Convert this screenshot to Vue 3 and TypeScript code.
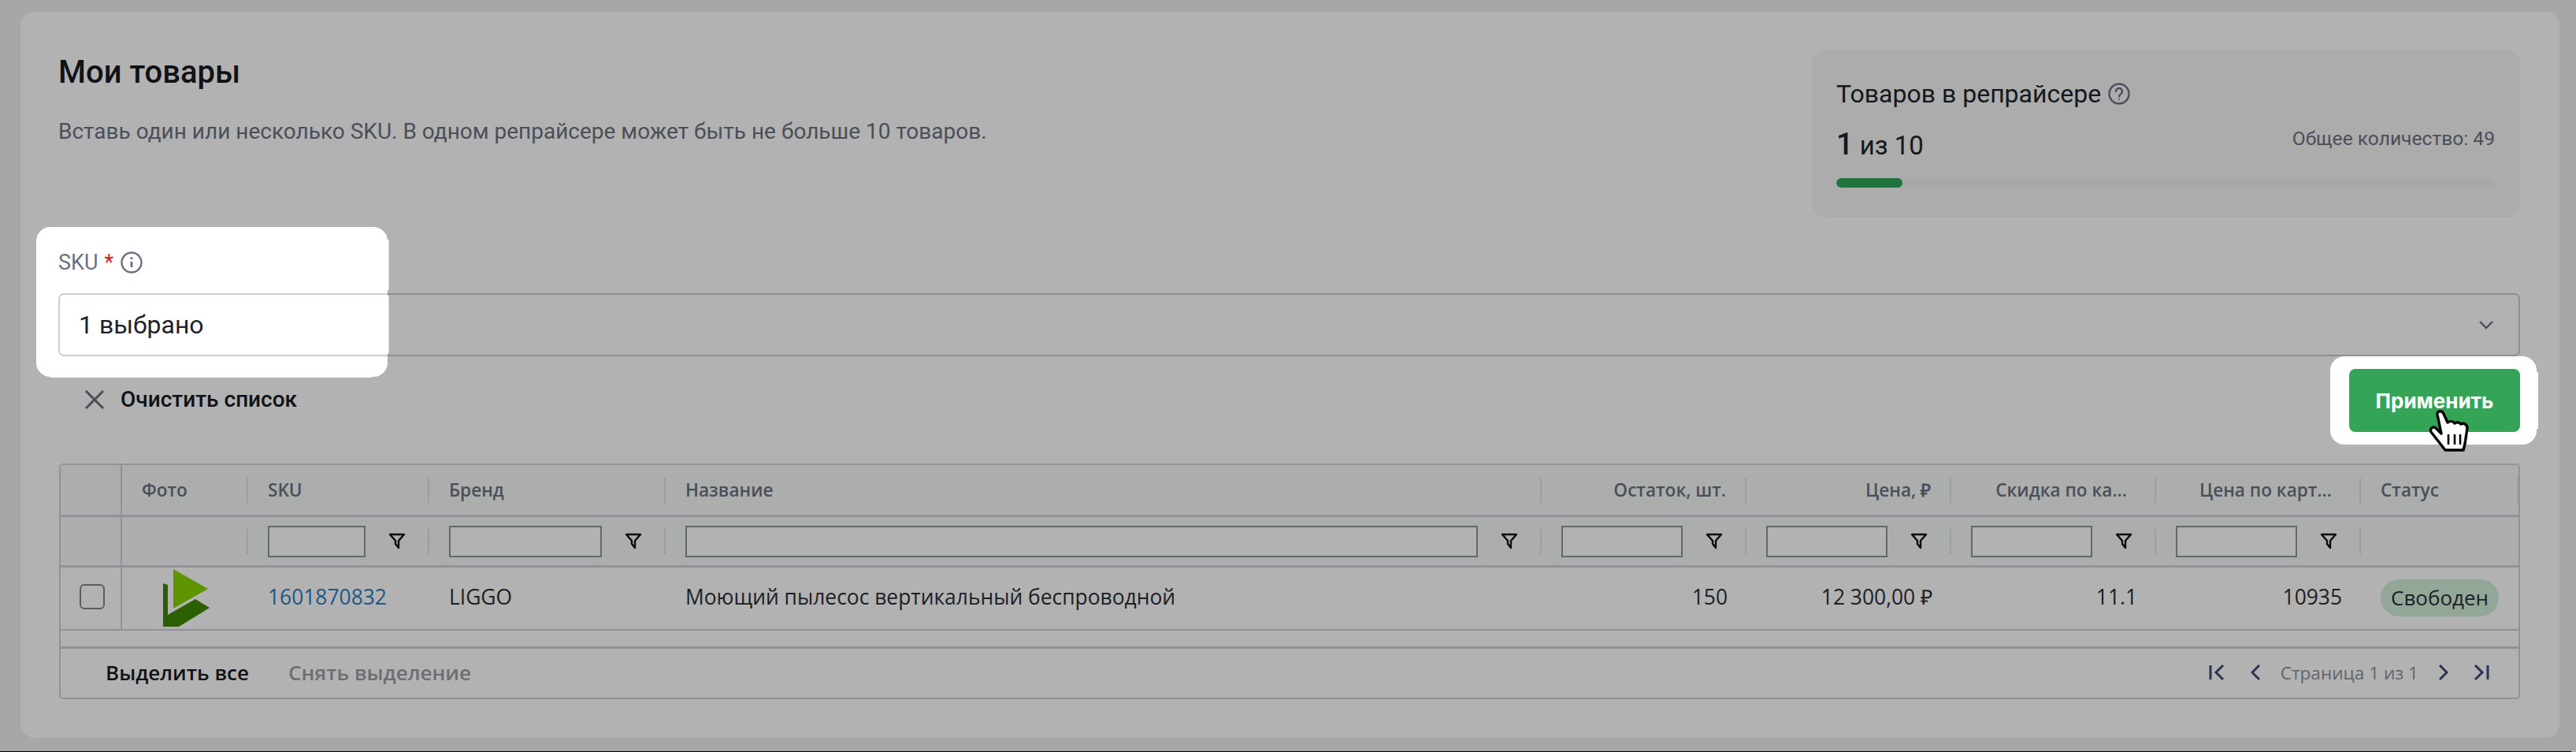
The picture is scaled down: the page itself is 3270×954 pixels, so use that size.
<script setup lang="ts">
interface Column {
  title: string
  align: 'left' | 'right'
  filter: boolean
  clip?: boolean
}

const columns: Column[] = [
  { title: 'SKU', align: 'left', filter: true },
  { title: 'Бренд', align: 'left', filter: true },
  { title: 'Название', align: 'left', filter: true },
  { title: 'Остаток, шт.', align: 'right', filter: true },
  { title: 'Цена, ₽', align: 'right', filter: true },
  { title: 'Скидка по ка...', align: 'right', filter: true, clip: true },
  { title: 'Цена по карт...', align: 'right', filter: true, clip: true },
  { title: 'Статус', align: 'left', filter: false },
]

const cells: { text: string; align: 'left' | 'right' }[] = [
  { text: 'LIGGO', align: 'left' },
  { text: 'Моющий пылесос вертикальный беспроводной', align: 'left' },
  { text: '150', align: 'right' },
  { text: '12 300,00 ₽', align: 'right' },
  { text: '11.1', align: 'right' },
  { text: '10935', align: 'right' },
]
</script>

<template>
  <div class="page">
    <section class="card">
      <header class="head">
        <div class="intro">
          <h1>Мои товары</h1>
          <p>Вставь один или несколько SKU. В одном репрайсере может быть не больше 10 товаров.</p>
        </div>
        <aside class="stats">
          <div class="stats-title">
            Товаров в репрайсере
            <svg width="30" height="30" viewBox="0 0 30 30" fill="none" stroke="#6b7280" stroke-width="2.4">
              <circle cx="15" cy="15" r="12.5" />
              <path d="M11 12a4 4 0 1 1 6.3 3.2c-1.5 1-2.3 1.7-2.3 3.3" stroke-linecap="round" />
              <circle cx="15" cy="22" r="1" fill="#6b7280" stroke="none" />
            </svg>
          </div>
          <div class="stats-row">
            <span class="count"><b>1</b> из 10</span>
            <span class="total">Общее количество: 49</span>
          </div>
          <div class="track"><div class="fill"></div></div>
        </aside>
      </header>

      <div class="field">
        <label class="label">
          SKU <em>*</em>
          <svg width="30" height="30" viewBox="0 0 30 30" fill="none" stroke="#6b7280" stroke-width="2.4">
            <circle cx="15" cy="15" r="12.5" />
            <path d="M15 14v7" stroke-width="3" />
            <circle cx="15" cy="9.5" r="1.6" fill="#6b7280" stroke="none" />
          </svg>
        </label>
        <div class="select">
          <span>1 выбрано</span>
          <svg width="24" height="24" viewBox="0 0 24 24" fill="none" stroke="#6b7280" stroke-width="2.4">
            <path d="M4 8l8 8 8-8" />
          </svg>
        </div>
      </div>

      <div class="actions">
        <button class="clear" type="button">
          <svg width="26" height="24" viewBox="0 0 26 24" fill="none" stroke="#6b7280" stroke-width="3">
            <path d="M2 1l22 22M24 1L2 23" />
          </svg>
          Очистить список
        </button>
        <button class="apply" type="button">Применить</button>
      </div>

      <div class="table">
        <div class="grid head-row">
          <div class="cell first"></div>
          <div class="cell"><span class="txt">Фото</span><i class="sep"></i></div>
          <div v-for="c in columns" :key="c.title" class="cell">
            <span class="txt" :class="[c.align, { clip: c.clip }]">{{ c.title }}</span>
            <i class="sep"></i>
          </div>
        </div>

        <div class="grid filter-row">
          <div class="cell first"></div>
          <div class="cell"><span class="txt"></span><i class="sep"></i></div>
          <div v-for="c in columns" :key="c.title" class="cell">
            <template v-if="c.filter">
              <input class="filter-input" type="text" />
              <svg class="funnel" width="22" height="21" viewBox="0 0 22 21" fill="none" stroke="#111" stroke-width="2.4">
                <path d="M2 2h18l-7 8v9l-4-5v-4z" stroke-linejoin="round" />
              </svg>
            </template>
            <span v-else class="txt"></span>
            <i class="sep" v-if="c.filter"></i>
          </div>
        </div>

        <div class="grid data-row">
          <div class="cell first check-cell"><span class="check"></span></div>
          <div class="cell photo">
            <svg width="60" height="75" viewBox="0 0 60 75">
              <path d="M13 0l44 25-44 25z" fill="#87d400" />
              <path d="M0 18l6 2v38l35-20 18 11-39 24H0z" fill="#408900" />
            </svg>
          </div>
          <div class="cell value"><a class="txt link">1601870832</a></div>
          <div v-for="c in cells" :key="c.text" class="cell value">
            <span class="txt" :class="c.align">{{ c.text }}</span>
          </div>
          <div class="cell"><span class="badge">Свободен</span></div>
        </div>

        <div class="strip"></div>

        <footer class="foot">
          <div class="select-links">
            <span class="strong">Выделить все</span>
            <span class="muted">Снять выделение</span>
          </div>
          <nav class="pager">
            <svg width="20" height="24" viewBox="0 0 20 24" fill="none" stroke="#3b4a78" stroke-width="3">
              <path d="M2 3v18M18 3l-9 9 9 9" />
            </svg>
            <svg class="gap-first" width="12" height="24" viewBox="0 0 12 24" fill="none" stroke="#3b4a78" stroke-width="3">
              <path d="M11 3l-9 9 9 9" />
            </svg>
            <span class="page-text">Страница 1 из 1</span>
            <svg width="12" height="24" viewBox="0 0 12 24" fill="none" stroke="#3b4a78" stroke-width="3">
              <path d="M1 3l9 9-9 9" />
            </svg>
            <svg class="gap-last" width="20" height="24" viewBox="0 0 20 24" fill="none" stroke="#3b4a78" stroke-width="3">
              <path d="M2 3l9 9-9 9M18 3v18" />
            </svg>
          </nav>
        </footer>
      </div>
    </section>
    <div class="edge"></div>

    <div class="dim"></div>
    <svg class="hand" width="52" height="56" viewBox="-2 -2 52 56">
      <path
        d="M9 5C8 0 15-1 17 4l5 11c3-2 7-2 9 1 3-2 6-1 8 1 4-2 8 1 8 5l-3 20-2 8H19L1 27c-2-5 3-8 7-4l6 6z"
        fill="#fff"
        stroke="#000"
        stroke-width="3.4"
        stroke-linejoin="round"
      />
      <path d="M23 30v13M31 30v13M38 30v13" stroke="#000" stroke-width="2.6" />
    </svg>
  </div>
</template>

<style scoped>
.page {
  position: relative;
  width: 3270px;
  height: 954px;
  overflow: hidden;
  box-sizing: border-box;
  padding: 15px 21px 0 26px;
  background: #f0f0f0;
  font-family: Roboto, "Noto Sans", sans-serif;
  color: #1f2329;
}
.card {
  height: 921px;
  box-sizing: border-box;
  padding: 48px 50px 0 48px;
  background: #fff;
  border-radius: 18px;
}
.head {
  display: flex;
  justify-content: space-between;
  align-items: flex-start;
  height: 213px;
}
h1 {
  margin: 6px 0 0;
  font-size: 40px;
  line-height: 46px;
  font-weight: 500;
  color: #161a20;
}
.intro p {
  margin: 34px 0 0;
  font-size: 28px;
  line-height: 36px;
  color: #6b7280;
}
.stats {
  width: 899px;
  height: 213px;
  box-sizing: border-box;
  padding: 38px 32px 0 31px;
  background: #f6f6f6;
  border-radius: 18px;
}
.stats-title {
  display: flex;
  align-items: center;
  gap: 8px;
  font-size: 32px;
  line-height: 36px;
}
.stats-row {
  display: flex;
  justify-content: space-between;
  align-items: flex-start;
  margin-top: 24px;
}
.count {
  font-size: 33px;
  line-height: 44px;
}
.count b {
  font-size: 38px;
  font-weight: 500;
}
.total {
  font-size: 24.6px;
  line-height: 30px;
  color: #6b7280;
}
.track {
  height: 12px;
  margin-top: 19px;
  border-radius: 6px;
  background: #f0f2f3;
  overflow: hidden;
}
.fill {
  width: 10%;
  height: 100%;
  border-radius: 6px;
  background: #2ca657;
}
.field {
  margin-top: 42px;
}
.label {
  display: flex;
  align-items: center;
  gap: 8px;
  height: 30px;
  font-size: 27px;
  color: #6b7280;
}
.label em {
  color: #d11a2a;
  font-style: normal;
}
.select {
  display: flex;
  align-items: center;
  justify-content: space-between;
  box-sizing: border-box;
  height: 80px;
  margin-top: 24px;
  padding: 0 29px 0 24px;
  border: 2px solid #cbced3;
  border-radius: 7px;
  background: #fff;
  font-size: 32px;
  color: #1f2329;
}
.actions {
  display: flex;
  justify-content: space-between;
  align-items: center;
  margin-top: 16px;
  height: 80px;
  padding-left: 33px;
}
.clear {
  display: flex;
  align-items: center;
  gap: 20px;
  padding: 0 0 3px;
  border: 0;
  background: none;
  font: 500 28px Roboto, sans-serif;
  color: #161a20;
}
.apply {
  width: 217px;
  height: 80px;
  border: 0;
  border-radius: 8px;
  background: #34a557;
  font: 700 26px Inter, "Noto Sans", sans-serif;
  color: #fff;
}
.table {
  margin-top: 40px;
  margin-left: 1px;
  border: 2px solid #ced1d8;
  border-radius: 5px;
  font-family: "Open Sans", sans-serif;
}
.grid {
  display: grid;
  grid-template-columns: 78px 160px 230px 300px 1112px 260px 260px 260px 260px 200px;
  align-items: stretch;
  box-sizing: border-box;
  border-bottom: 3px solid #ced1d8;
}
.head-row {
  height: 66px;
  background: #f7faf9;
  font-size: 22.6px;
  font-weight: 600;
  color: #6b7280;
}
.filter-row {
  height: 64px;
  background: #f7faf9;
}
.data-row {
  height: 80px;
  border-bottom-width: 2px;
  font-size: 26.4px;
  color: #2b2f36;
}
.cell {
  display: flex;
  align-items: center;
  min-width: 0;
  padding-left: 25px;
}
.value {
  padding-bottom: 4px;
}
.first {
  padding-left: 0;
  justify-content: center;
  border-right: 2px solid #ced1d8;
}
.check-cell {
  padding-left: 0;
  padding-bottom: 4px;
}
.txt {
  flex: 1;
  white-space: nowrap;
  overflow: hidden;
}
.txt.right {
  text-align: right;
  padding-right: 24px;
}
.txt.clip {
  padding-right: 35px;
}
.sep {
  flex: none;
  width: 2px;
  height: 32px;
  background: #dfe2e4;
}
.filter-input {
  flex: 1;
  min-width: 0;
  box-sizing: border-box;
  height: 40px;
  margin: 0;
  border: 2px solid #8a9897;
  background: #fff;
}
.funnel {
  flex: none;
  margin: 0 28px 0 29px;
}
.check {
  width: 32px;
  height: 32px;
  box-sizing: border-box;
  margin-left: 4px;
  border: 2px solid #808690;
  border-radius: 6px;
}
.photo {
  padding-left: 52px;
}
.link {
  color: #2b7fc7;
}
.badge {
  padding: 4px 13px 5px;
  margin-bottom: 2px;
  border-radius: 24px;
  background: #d1efda;
  font-size: 26px;
  line-height: 38px;
  color: #2b2f36;
}
.strip {
  height: 20px;
  border-bottom: 3px solid #ced1d8;
  box-sizing: content-box;
}
.foot {
  display: flex;
  justify-content: space-between;
  align-items: center;
  height: 60px;
  padding: 0 37px 2px 57px;
  font-size: 26px;
  font-weight: 600;
}
.select-links {
  display: flex;
  gap: 50px;
}
.strong {
  color: #161a20;
}
.muted {
  color: #9a9fa6;
}
.pager {
  display: flex;
  align-items: center;
  gap: 26px;
  font-weight: 400;
}
.gap-first {
  margin-left: 7px;
}
.gap-last {
  margin-left: 6px;
}
.page-text {
  font-size: 22.6px;
  color: #8c929b;
}
.edge {
  position: absolute;
  left: 0;
  bottom: 0;
  width: 3264px;
  height: 1px;
  background: #000;
  z-index: 2;
}
.dim {
  position: absolute;
  inset: 0;
  background: rgba(0, 0, 0, 0.3);
  clip-path: path(evenodd, "M0 0H3270V954H0Z M64 288H474A18 18 0 0 1 492 306V460A18 18 0 0 1 474 478H64A18 18 0 0 1 46 460V306A18 18 0 0 1 64 288Z M492 304H493.5V368H492Z M492 375H493.5V448H492Z M64 478H472V479H64Z M2976 452H3202A18 18 0 0 1 3220 470V546A18 18 0 0 1 3202 564H2976A18 18 0 0 1 2958 546V470A18 18 0 0 1 2976 452Z M3220 472H3222V544H3220Z");
}
.hand {
  position: absolute;
  left: 3083px;
  top: 519px;
}
</style>

<style>
html,
body {
  margin: 0;
  background: #f0f0f0;
}
</style>
